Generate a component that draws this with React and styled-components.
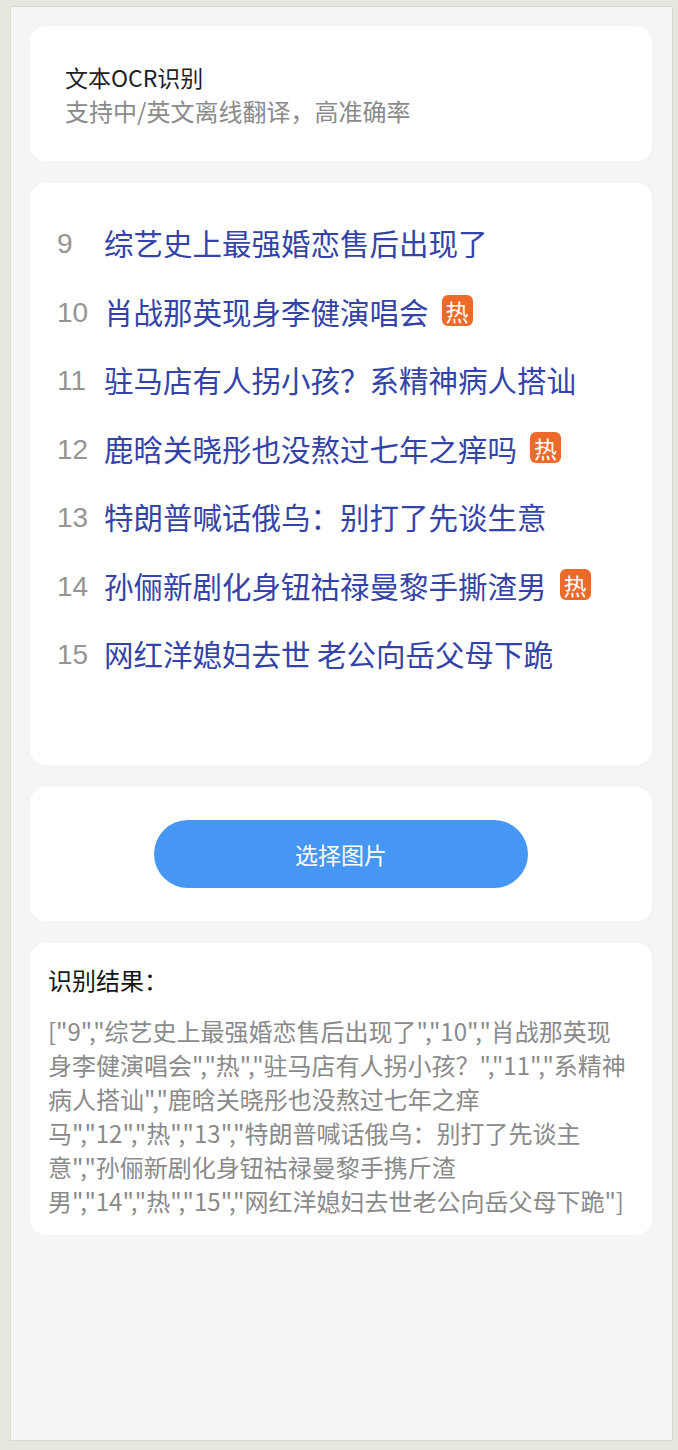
import styled, { createGlobalStyle } from "styled-components"

const GlobalStyle = createGlobalStyle`
  html, body {
    margin: 0;
    padding: 0;
    background: #e6e8df;
    font-family: "Noto Sans CJK SC", "Noto Sans", sans-serif;
  }
`

const Frame = styled.div`
  box-sizing: border-box;
  width: 663px;
  height: 1435px;
  margin: 6px 0 0 10px;
  padding: 19px 20px 0 19px;
  background: #f5f5f5;
  border: 1px solid #d9dbd3;
  display: flex;
  flex-direction: column;
  gap: 22px;
`

const Card = styled.section`
  box-sizing: border-box;
  background: #ffffff;
  border-radius: 16px;
  height: ${(p) => p.$h}px;
`

const IntroCard = styled(Card)`
  padding: 35px 35px 0;
  display: flex;
  flex-direction: column;
`

const IntroTitle = styled.div`
  font-size: 23px;
  line-height: 33px;
  color: #1f1f1f;
`

const IntroSub = styled.div`
  font-size: 24px;
  line-height: 33px;
  color: #8a8a8a;
`

const ListCard = styled(Card)`
  padding: 25px 27px 0;
  display: flex;
  flex-direction: column;
`

const Row = styled.div`
  height: 68.5px;
  display: flex;
  align-items: center;
`

const Num = styled.span`
  width: 47px;
  flex: none;
  padding-top: 4px;
  font-family: "Liberation Sans", "Noto Sans", sans-serif;
  font-size: 28px;
  color: #959595;
`

const Headline = styled.span`
  font-size: 29.5px;
  color: #3443a8;
  white-space: nowrap;
`

const HotBadge = styled.span`
  width: 31px;
  height: 31px;
  margin-left: 13px;
  border-radius: 6px;
  background: #ec6b2b;
  color: #ffffff;
  font-size: 23px;
  display: flex;
  align-items: center;
  justify-content: center;
  flex: none;
`

const ActionCard = styled(Card)`
  display: flex;
  align-items: center;
  justify-content: center;
`

const PickButton = styled.button`
  width: 374px;
  height: 68px;
  border: none;
  border-radius: 34px;
  background: #4696f4;
  color: #ffffff;
  font-family: "Noto Sans CJK SC", sans-serif;
  font-size: 23px;
  cursor: pointer;
`

const ResultCard = styled(Card)`
  padding: 20px 18px 0;
`

const ResultTitle = styled.div`
  font-size: 24px;
  line-height: 34px;
  color: #151515;
  margin-bottom: 17px;
`

const ResultText = styled.div`
  font-size: 24px;
  line-height: 34px;
  color: #8a8a8a;
`

const items = [
  { n: 9, t: "综艺史上最强婚恋售后出现了" },
  { n: 10, t: "肖战那英现身李健演唱会", hot: true },
  { n: 11, t: "驻马店有人拐小孩？系精神病人搭讪" },
  { n: 12, t: "鹿晗关晓彤也没熬过七年之痒吗", hot: true },
  { n: 13, t: "特朗普喊话俄乌：别打了先谈生意" },
  { n: 14, t: "孙俪新剧化身钮祜禄曼黎手撕渣男", hot: true },
  { n: 15, t: "网红洋媳妇去世 老公向岳父母下跪" },
]

const result = [
  "9", "综艺史上最强婚恋售后出现了", "10", "肖战那英现身李健演唱会", "热",
  "驻马店有人拐小孩？", "11", "系精神病人搭讪", "鹿晗关晓彤也没熬过七年之痒马",
  "12", "热", "13", "特朗普喊话俄乌：别打了先谈主意", "孙俪新剧化身钮祜禄曼黎手携斤渣男",
  "14", "热", "15", "网红洋媳妇去世老公向岳父母下跪",
]

export default function App() {
  return (
    <>
      <GlobalStyle />
      <Frame>
        <IntroCard $h={135}>
          <IntroTitle>文本OCR识别</IntroTitle>
          <IntroSub>支持中/英文离线翻译，高准确率</IntroSub>
        </IntroCard>

        <ListCard $h={582}>
          {items.map((it) => (
            <Row key={it.n}>
              <Num>{it.n}</Num>
              <Headline>{it.t}</Headline>
              {it.hot && <HotBadge>热</HotBadge>}
            </Row>
          ))}
        </ListCard>

        <ActionCard $h={134}>
          <PickButton>选择图片</PickButton>
        </ActionCard>

        <ResultCard $h={292}>
          <ResultTitle>识别结果：</ResultTitle>
          <ResultText>{JSON.stringify(result)}</ResultText>
        </ResultCard>
      </Frame>
    </>
  )
}
